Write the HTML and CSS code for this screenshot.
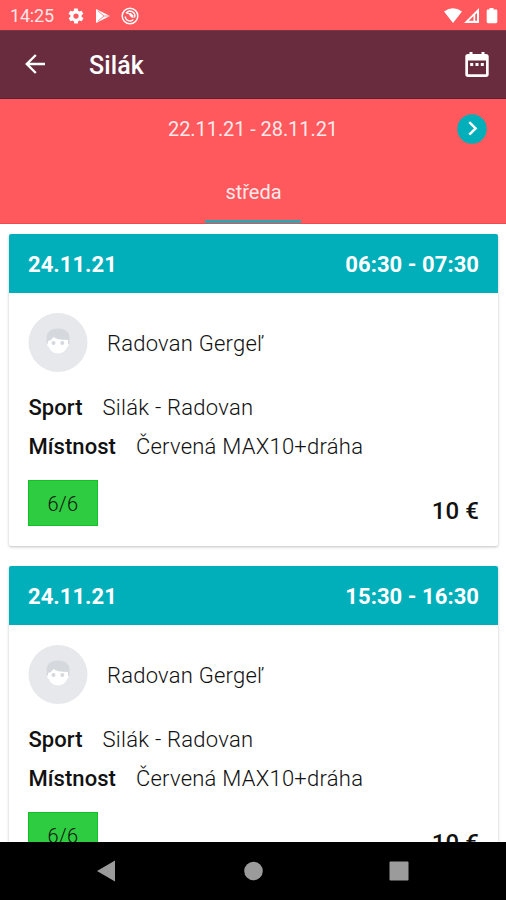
FILE: index.html
```html
<!DOCTYPE html>
<html lang="cs">
<head>
<meta charset="utf-8">
<title>Silák</title>
<link rel="stylesheet" href="styles.css">
</head>
<body>
<div class="screen">
  <div class="status">
    <span class="clock">14:25</span>
    <svg class="gear" width="18" height="18" viewBox="0 0 24 24"><path fill="currentColor" fill-rule="evenodd" d="M19.4 13c0-.3.1-.6.1-1s0-.7-.1-1l2.1-1.6c.2-.2.3-.4.1-.6l-2-3.500c-.1-.2-.4-.3-.6-.2l-2.500 1c-.5-.4-1.100-.7-1.700-1l-.4-2.600c0-.3-.2-.5-.5-.5h-4c-.2 0-.4.2-.5.4l-.4 2.700c-.6.2-1.100.6-1.700 1l-2.500-1c-.2-.1-.5 0-.6.2l-2 3.500c-.1.200-.1.500.1.600L4.600 11c0 .3-.1.600-.1 1s0 .7.100 1l-2.100 1.600c-.2.2-.3.400-.1.600l2 3.500c.1.200.4.300.6.200l2.500-1c.5.400 1.100.700 1.700 1l.4 2.600c0 .3.200.5.500.5h4c.3 0 .5-.2.500-.5l.4-2.600c.6-.3 1.200-.6 1.700-1l2.500 1c.200.100.5 0 .6-.2l2-3.500c.1-.2.100-.5-.1-.6zM12 15.500a3.500 3.500 0 1 1 0-7 3.500 3.500 0 0 1 0 7z"/></svg>
    <svg class="play" width="16" height="16" viewBox="0 0 16 16"><path fill="currentColor" d="M1 1l14 7-14 7z"/><path d="M3 3l6 5-6 5M9 8h5" fill="none" stroke="#ff8c90" stroke-width="1"/></svg>
    <svg class="sync" width="18" height="18" viewBox="0 0 18 18" fill="none" stroke="currentColor"><circle cx="9" cy="9" r="7.800" stroke-width="1.500"/><path d="M5 6.200a4.800 4.800 0 0 1 8.500 4.300M12.300 12.600a4.800 4.800 0 0 1-8.100-3.100M5.300 6.300c2-.6 3.200.3 3.900 1.700s1.800 2.200 3.300 2.200M9 6.200l3.200 3" stroke-width="1.400"/></svg>
    <svg class="signals" width="56" height="18" viewBox="0 0 56 18" fill="currentColor"><path d="M1 4.500Q10 -2 19 4.500L10 16z"/><path fill-rule="evenodd" d="M21 16L36 1v15zM29 13.700h1.500V9L25.800 13.700zM32.200 7.500v6.200H34V6z"/><path d="M46.500 1h4v1.500H53c.8 0 1.300.5 1.300 1.300V15c0 .7-.5 1.200-1.300 1.200h-8c-.8 0-1.300-.5-1.300-1.200V3.800c0-.8.5-1.300 1.300-1.300h1.500z"/></svg>
  </div>
  <header class="appbar">
    <svg class="back" width="22" height="22" viewBox="0 0 22 22"><path d="M21 11H3M11.800 2L2.800 11l9 9" fill="none" stroke="currentColor" stroke-width="2.400"/></svg>
    <h1>Silák</h1>
    <svg class="calendar" width="26" height="28" viewBox="0 0 26 28"><path fill="currentColor" fill-rule="evenodd" d="M5.500 1h3v2h9V1h3v2h1.500c1.700 0 2.700 1 2.700 2.600v18c0 1.500-1 2.500-2.700 2.500H4c-1.700 0-2.700-1-2.700-2.500v-18C1.300 4 2.300 3 4 3h1.500zM4 9.600v13.600h18V9.600zM6.200 12h3v3h-3zm5.300 0h3v3h-3zm5.300 0h3v3h-3z"/></svg>
  </header>
  <section class="week">
    <div class="range"><span>22.11.21 - 28.11.21</span>
      <svg class="next" width="30" height="30" viewBox="0 0 30 30"><circle cx="15" cy="15" r="14.700" fill="#00afba"/><path d="M12.300 8.200l6.300 6.200-6.300 6.200" fill="none" stroke="#fff" stroke-width="2.500"/></svg>
    </div>
    <div class="tab"><span>středa</span></div>
  </section>
  <main class="list">
    <article class="card">
      <div class="head"><span class="date">24.11.21</span><span class="time">06:30 - 07:30</span></div>
      <div class="body">
        <div class="coach">
          <svg width="60" height="60" viewBox="0 0 60 60"><circle cx="30" cy="29.500" r="29.500" fill="#e6e8ec"/><path d="M18.500 31V25q0-9 11.500-9.500 11.500.5 11.500 9.500v6z" fill="#d5d9dd"/><path d="M20 28q4-1 5.500-4 3 3 14.500 3v3.500q1 0 .5 2-.6 1-1 1Q36.500 40.500 30 40.500T20.500 33.500q-.8 0-1.200-1.500t.7-2z" fill="#fff"/><circle cx="25.500" cy="30" r="2" fill="#d5d9dd"/><circle cx="34.300" cy="30" r="2" fill="#d5d9dd"/></svg>
          <span class="name">Radovan Gergeľ</span>
        </div>
        <div class="row"><b class="sport">Sport</b><span class="course">Silák - Radovan</span></div>
        <div class="row"><b class="place">Místnost</b><span class="room">Červená MAX10+dráha</span></div>
        <div class="foot"><span class="seats">6/6</span><span class="price">10 €</span></div>
      </div>
    </article>
    <article class="card">
      <div class="head"><span class="date">24.11.21</span><span class="time">15:30 - 16:30</span></div>
      <div class="body">
        <div class="coach">
          <svg width="60" height="60" viewBox="0 0 60 60"><circle cx="30" cy="29.500" r="29.500" fill="#e6e8ec"/><path d="M18.500 31V25q0-9 11.500-9.500 11.500.5 11.500 9.500v6z" fill="#d5d9dd"/><path d="M20 28q4-1 5.500-4 3 3 14.500 3v3.500q1 0 .5 2-.6 1-1 1Q36.500 40.500 30 40.500T20.500 33.500q-.8 0-1.200-1.500t.7-2z" fill="#fff"/><circle cx="25.500" cy="30" r="2" fill="#d5d9dd"/><circle cx="34.300" cy="30" r="2" fill="#d5d9dd"/></svg>
          <span class="name">Radovan Gergeľ</span>
        </div>
        <div class="row"><b class="sport">Sport</b><span class="course">Silák - Radovan</span></div>
        <div class="row"><b class="place">Místnost</b><span class="room">Červená MAX10+dráha</span></div>
        <div class="foot"><span class="seats">6/6</span><span class="price">10 €</span></div>
      </div>
    </article>
  </main>
  <nav class="nav">
    <svg width="20" height="22" viewBox="0 0 20 22"><path d="M1 11L19 .5v21z" fill="currentColor"/></svg>
    <svg width="20" height="20" viewBox="0 0 20 20"><circle cx="10.500" cy="10" r="9.300" fill="currentColor"/></svg>
    <svg width="20" height="20" viewBox="0 0 20 20"><rect x=".5" y=".5" width="19" height="19" rx="1" fill="currentColor"/></svg>
  </nav>
</div>
</body>
</html>
```

FILE: styles.css
```css
* { box-sizing: border-box; }
body { margin: 0; font-family: Roboto, "Liberation Sans", sans-serif; background: #fff; color: #111; }
svg { display: block; flex: none; }
.screen { width: 506px; height: 900px; display: flex; flex-direction: column; overflow: hidden; }

.status { height: 30px; flex: none; background: #ff585d; color: #fff; display: flex; align-items: center; padding: 1px 7px 0 10px; }
.clock { width: 57px; font-size: 18px; line-height: 20px; letter-spacing: -.2px; opacity: .85; }
.play { margin-left: 10px; }
.sync { margin-left: 10px; }
.signals { margin-left: auto; }

.appbar { height: 69px; flex: none; background: #692c3e; border-top: 1px solid #7d3546; border-bottom: 1px solid #592338; color: #fff; display: flex; align-items: center; padding: 0 16px 0 24px; }
.back { margin-top: -1px; }
.appbar h1 { margin: 2px 0 0 43px; font-size: 25px; font-weight: 500; line-height: 30px; letter-spacing: .1px; }
.calendar { margin-left: auto; }

.week { height: 125px; flex: none; background: #ff585d; border-bottom: 1px solid #f04a50; color: #ffe9ea; display: flex; flex-direction: column; align-items: center; justify-content: space-between; }
.range { width: 100%; height: 60px; display: grid; grid-template-columns: 49px 1fr 49px; align-items: center; }
.range span { grid-column: 2; text-align: center; font-size: 20px; letter-spacing: -.08px; }
.next { margin-top: -1px; }
.tab { width: 96px; height: 64px; border-bottom: 3px solid #2aa7b0; text-align: center; font-size: 20px; line-height: 66px; padding-left: 1px; }

.list { flex: 1; min-height: 0; overflow: hidden; padding: 10px 8px 0 9px; display: flex; flex-direction: column; gap: 20px; }
.card { height: 312px; flex: none; background: #fff; border-radius: 2px; box-shadow: 0 1px 3px rgba(0,0,0,.25); overflow: hidden; }
.head { height: 59px; background: #00afba; color: #fff; display: flex; align-items: center; justify-content: space-between; padding: 2px 19px 0; font-size: 22px; font-weight: 700; letter-spacing: .05px; }
.body { padding: 20px 19px 0; }
.coach { display: flex; align-items: center; gap: 19px; height: 60px; margin-bottom: 15px; font-size: 22px; font-weight: 300; letter-spacing: .23px; }
.row { display: flex; align-items: center; gap: 20px; height: 39px; padding-left: .5px; font-size: 22px; font-weight: 300; letter-spacing: .25px; }
.row b { font-weight: 500; letter-spacing: .05px; }
.foot { display: flex; justify-content: space-between; margin-top: 14px; height: 46px; }
.seats { width: 70px; height: 46px; background: #2ecc40; border: 1px solid #12c124; text-align: center; font-size: 20px; font-weight: 300; line-height: 46px; letter-spacing: .3px; }
.price { align-self: flex-end; font-size: 24px; font-weight: 500; line-height: 30px; letter-spacing: .1px; }

.nav { height: 58px; flex: none; background: #000; color: #9b9b9b; display: flex; align-items: center; justify-content: space-between; padding: 0 97px 0 96px; }
```
